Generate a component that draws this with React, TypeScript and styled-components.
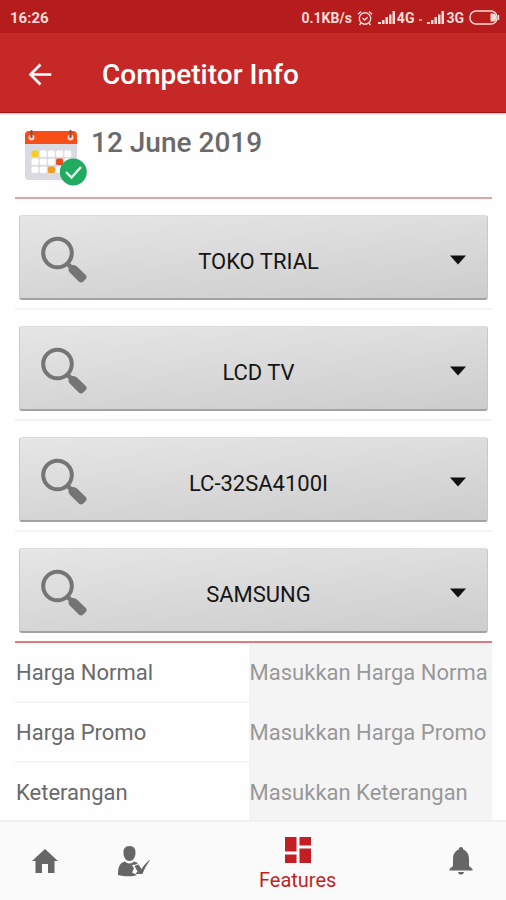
import React, { useState } from "react";
import styled, { createGlobalStyle } from "styled-components";

const GlobalStyle = createGlobalStyle`
  *, *::before, *::after { box-sizing: border-box; }
  body {
    margin: 0;
    background: #fefefe;
    font-family: Roboto, "Noto Sans", sans-serif;
    color: #6a6a6a;
  }
`;

const Screen = styled.div`
  display: flex;
  flex-direction: column;
  height: 100vh;
`;

const StatusBar = styled.div`
  display: flex;
  align-items: center;
  justify-content: space-between;
  flex: none;
  height: 33px;
  padding: 2px 6px 0 10px;
  background: #b71c1c;
  color: #fbdcd8;
  font-size: 15px;
  font-weight: 700;
`;

const StatusGroup = styled.div`
  display: flex;
  align-items: center;
  gap: 5px;
  font-size: 14px;
`;

const SimLabel = styled.span`
  display: flex;
  align-items: center;
  gap: 1px;
`;

const AppBar = styled.header`
  display: flex;
  align-items: center;
  flex: none;
  gap: 48px;
  height: 80px;
  padding: 4px 26px 0;
  background: #c62828;
  border-bottom: 1px solid #a91313;
  box-shadow: 0 1px 2px rgba(198, 40, 40, 0.35);
  color: #fff;
`;

const BackButton = styled.button`
  display: flex;
  padding: 0;
  border: 0;
  background: none;
  color: inherit;
  cursor: pointer;
`;

const Title = styled.h1`
  margin: 0;
  font-size: 28px;
  font-weight: 500;
`;

const Content = styled.main`
  flex: 1;
  min-height: 0;
  overflow: hidden;
  padding: 0 14px 0 15px;
`;

const DateRow = styled.div`
  display: flex;
  gap: 4px;
  height: 86px;
  padding: 16px 0 0 9px;
  border-bottom: 2px solid #dfa3a8;
`;

const DateText = styled.h2`
  margin: 0;
  font-size: 28px;
  line-height: 28px;
  font-weight: 500;
`;

const PickerRow = styled.div<{ $last?: boolean }>`
  padding: 16px 4px 8px;
  border-bottom: 2px solid ${(p) => (p.$last ? "#dc7a80" : "#f3f3f3")};
`;

const PickerBox = styled.label`
  display: grid;
  align-items: center;
  height: 85px;
  border: 1px solid #c8c8c8;
  border-top-color: #dcdcdc;
  border-bottom: 2px solid #a2a2a2;
  border-radius: 3px;
  background: linear-gradient(175deg, #e6e6e6, #cdcdcd);

  > * {
    grid-area: 1 / 1;
  }
  > svg {
    pointer-events: none;
  }
`;

const SearchIcon = styled.svg`
  margin: 6px 0 0 20px;
`;

const Caret = styled.svg`
  justify-self: end;
  margin: 6px 20px 0 0;
`;

const Select = styled.select`
  width: 100%;
  height: 100%;
  padding: 8px 36px 0 46px;
  border: 0;
  appearance: none;
  background: none;
  color: #151515;
  font: 400 22px Roboto, "Noto Sans", sans-serif;
  text-align: center;
  text-align-last: center;
  cursor: pointer;
`;

const FieldRow = styled.div`
  display: flex;
  height: 60px;
  border-bottom: 2px solid #f4f4f4;
  font-size: 22px;
`;

const FieldLabel = styled.label`
  display: flex;
  align-items: center;
  flex: 34 1 0;
  min-width: 0;
  padding-left: 1px;
`;

const FieldInput = styled.input`
  flex: 35 1 0;
  min-width: 0;
  padding: 0 3px 0 1px;
  border: 0;
  border-radius: 0;
  background: #f4f4f4;
  color: #6a6a6a;
  font: inherit;

  &::placeholder {
    color: #989898;
    opacity: 1;
  }
`;

const BottomNav = styled.nav`
  display: flex;
  flex: none;
  height: 80px;
  border-top: 2px solid #f1f1f1;
  background: #fafafa;
`;

const NavButton = styled.button<{ $active?: boolean }>`
  display: flex;
  flex-direction: column;
  align-items: center;
  justify-content: center;
  flex: ${(p) => (p.$active ? 8 : 3)} 1 0;
  gap: 5px;
  min-width: 0;
  padding: ${(p) => (p.$active ? "7px" : "0")} 0 0;
  border: 0;
  background: none;
  color: ${(p) => (p.$active ? "#c21f24" : "#666")};
  font: 400 20px Roboto, "Noto Sans", sans-serif;
  cursor: pointer;
`;

function Signal() {
  return (
    <svg width="18" height="13" viewBox="0 0 18 13" fill="currentColor" aria-hidden="true">
      <path d="M0 11h3v2H0zM4 9h2.500v4H4zM7.500 6h2.500v7H7.500zM11 3.500h2.500V13H11zM14.500 0H17v13h-2.500z" />
    </svg>
  );
}

function Alarm() {
  return (
    <svg width="16" height="16" viewBox="0 0 16 16" fill="none" stroke="currentColor" strokeWidth="1.400" aria-hidden="true">
      <circle cx="8" cy="8.500" r="5.700" />
      <path d="M1 4.200 4 1.500M15 4.200 12 1.500M5.500 8l2.200 2 3-2.700M4 13l-1.500 2M12 13l1.500 2" />
    </svg>
  );
}

function Battery() {
  return (
    <svg width="31" height="15" viewBox="0 0 31 15" aria-hidden="true">
      <rect x="1" y="1" width="27" height="13" rx="6" fill="none" stroke="currentColor" strokeWidth="1.400" />
      <path d="M21.500 3.500H24a3 3 0 0 1 3 3v2a3 3 0 0 1-3 3h-2.500z" fill="currentColor" />
      <path d="M29.500 5v5" stroke="currentColor" strokeWidth="1.400" />
    </svg>
  );
}

function BackArrow() {
  return (
    <svg width="28" height="28" viewBox="0 0 28 28" fill="none" stroke="currentColor" strokeWidth="2.700" aria-hidden="true">
      <path d="M25.300 13.500H4.500M14.500 3.500l-10 10 10 10" />
    </svg>
  );
}

function CalendarIcon() {
  const marks: Record<string, string> = { "0-0": "#f8cf1c", "1-3": "#ee4a1b", "2-2": "#f69a1c" };
  return (
    <svg width="63" height="58" viewBox="0 0 63 58" aria-hidden="true">
      <rect x="1" y="3" width="52" height="48" rx="4" fill="#d9dae2" />
      <path d="M1 15V6a4 4 0 0 1 4-4h44a4 4 0 0 1 4 4v9z" fill="#f64e16" />
      {[7.5, 46.5].map((x) => (
        <g key={x}>
          <circle cx={x} cy="8.500" r="3" fill="#f9d3c6" />
          <path d={`M${x} 2v6`} stroke="#7b5148" strokeWidth="2.200" strokeLinecap="round" />
        </g>
      ))}
      {[0, 1, 2].map((row) =>
        [0, 1, 2, 3, 4].map((col) => (
          <rect
            key={`${row}-${col}`}
            x={7.5 + col * 8.2}
            y={21.500 + row * 8}
            width="7"
            height="6.500"
            rx="1.500"
            fill={marks[`${row}-${col}`] ?? "#fff"}
          />
        ))
      )}
      <circle cx="49.300" cy="43" r="13.500" fill="#20ab60" />
      <path d="m42 43 5.500 5.500L57 38" fill="none" stroke="#e9fbe9" strokeWidth="2.400" />
    </svg>
  );
}

function Magnifier() {
  return (
    <SearchIcon width="48" height="48" viewBox="0 0 48 48" aria-hidden="true">
      <circle cx="17.500" cy="17" r="14.300" fill="none" stroke="#757575" strokeWidth="4" />
      <path
        d="M29.500 26.500 32 29q3-.5 5 1.500l9 8.800q1.500 1.700 0 3.500l-3 3q-2 1.500-4 0l-9-9q-2-2-1.500-5L26 29.500z"
        fill="#757575"
      />
    </SearchIcon>
  );
}

function HomeIcon() {
  return (
    <svg width="28" height="26" viewBox="0 0 28 26" fill="currentColor" aria-hidden="true">
      <path d="M14 1 27 13h-3.500v12H17v-9h-6v9H4.500V13H1z" />
    </svg>
  );
}

function PersonCheckIcon() {
  return (
    <svg width="34" height="32" viewBox="0 0 34 32" fill="currentColor" aria-hidden="true">
      <path d="M12.500 1C17 1 18.800 4 18.500 8c-.2 4.500-2.500 8-6 8s-5.800-3.500-6-8C6.200 4 8 1 12.500 1z" />
      <path d="M8 16.500c2 2.500 7 2.500 9 0l4 1.500-2 1.500-4 .5 2 3.500-2 4 5 2.500c-3 1.500-12 2-19 0 0-7 1-12 7-13.500z" />
      <path d="m17.500 21 4-1.500 3 4.500c2-3.500 5-7 9-9.500-3.500 4.500-6 9-8 14.500h-7l2-2.500z" />
    </svg>
  );
}

function FeaturesIcon() {
  return (
    <svg width="26" height="26" viewBox="0 0 26 26" fill="currentColor" aria-hidden="true">
      <path d="M0 0h11.500v14.500H0zM14.500 0H26v8.500H14.500zM0 17.500h11.500V26H0zM14.500 11.500H26V26H14.500z" />
    </svg>
  );
}

function BellIcon() {
  return (
    <svg width="24" height="28" viewBox="0 0 24 28" fill="currentColor" aria-hidden="true">
      <path d="M12 0c1.400 0 2.200 1 2.200 2.600C18 4 20 7.500 20 12v7l3.500 3v1.500H.5V22L4 19v-7c0-4.500 2-8 5.800-9.400C9.800 1 10.600 0 12 0zM9 25h6c-.4 1.800-1.600 2.600-3 2.600S9.400 26.800 9 25z" />
    </svg>
  );
}

const pickers = [
  { name: "Toko", value: "TOKO TRIAL" },
  { name: "Kategori", value: "LCD TV" },
  { name: "Model", value: "LC-32SA4100I" },
  { name: "Kompetitor", value: "SAMSUNG" },
];

const fields = ["Harga Normal", "Harga Promo", "Keterangan"];

export default function App() {
  const [values, setValues] = useState<Record<string, string>>({});

  return (
    <>
      <GlobalStyle />
      <Screen>
        <StatusBar>
          <span>16:26</span>
          <StatusGroup>
            <span>0.1KB/s</span>
            <Alarm />
            <SimLabel>
              <Signal />
              4G
            </SimLabel>
            <svg width="3" height="8" viewBox="0 0 3 8" fill="#e08a86" aria-hidden="true">
              <path d="M0 5h3v2H0z" />
            </svg>
            <SimLabel>
              <Signal />
              3G
            </SimLabel>
            <Battery />
          </StatusGroup>
        </StatusBar>
        <AppBar>
          <BackButton type="button" aria-label="Back">
            <BackArrow />
          </BackButton>
          <Title>Competitor Info</Title>
        </AppBar>
        <Content>
          <DateRow>
            <CalendarIcon />
            <DateText>12 June 2019</DateText>
          </DateRow>
          {pickers.map((picker, i) => (
            <PickerRow key={picker.name} $last={i === pickers.length - 1}>
              <PickerBox>
                <Select aria-label={picker.name} defaultValue={picker.value}>
                  <option>{picker.value}</option>
                </Select>
                <Magnifier />
                <Caret width="18" height="10" viewBox="0 0 18 10" aria-hidden="true">
                  <path d="M1 .5h16L9 9.500z" fill="#111" />
                </Caret>
              </PickerBox>
            </PickerRow>
          ))}
          {fields.map((field) => {
            const id = field.toLowerCase().replace(" ", "-");
            return (
              <FieldRow key={field}>
                <FieldLabel htmlFor={id}>{field}</FieldLabel>
                <FieldInput
                  id={id}
                  placeholder={`Masukkan ${field}`}
                  value={values[field] ?? ""}
                  onChange={(e) => setValues({ ...values, [field]: e.target.value })}
                />
              </FieldRow>
            );
          })}
        </Content>
        <BottomNav>
          <NavButton type="button" aria-label="Home">
            <HomeIcon />
          </NavButton>
          <NavButton type="button" aria-label="Attendance">
            <PersonCheckIcon />
          </NavButton>
          <NavButton type="button" $active>
            <FeaturesIcon />
            Features
          </NavButton>
          <NavButton type="button" aria-label="Notifications">
            <BellIcon />
          </NavButton>
        </BottomNav>
      </Screen>
    </>
  );
}
